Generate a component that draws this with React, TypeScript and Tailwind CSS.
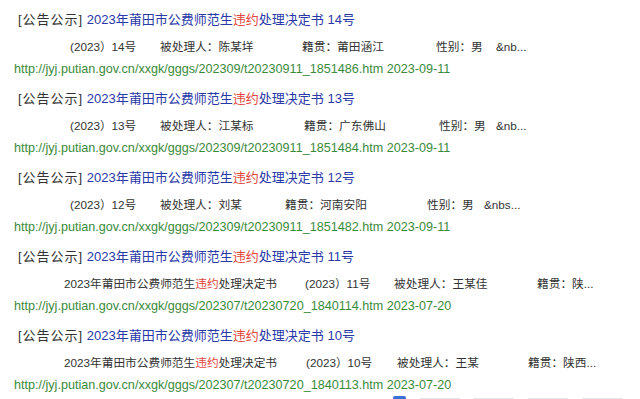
import React from "react";

type Cell = { text: string; w: string };

type Item = {
  no: string;
  snipPad: string;
  cells: Cell[];
  url: string;
  date: string;
};

const TITLE = ["2023年莆田市公费师范生", "违约", "处理决定书"];

const items: Item[] = [
  {
    no: "14号",
    snipPad: "pl-[70px]",
    cells: [
      { text: "(2023）14号", w: "w-[90px]" },
      { text: "被处理人：陈某垟", w: "w-[142px]" },
      { text: "籍贯：莆田涵江", w: "w-[134px]" },
      { text: "性别：男", w: "w-[60px]" },
      { text: "&nb...", w: "" },
    ],
    url: "http://jyj.putian.gov.cn/xxgk/gggs/202309/t20230911_1851486.htm",
    date: "2023-09-11",
  },
  {
    no: "13号",
    snipPad: "pl-[70px]",
    cells: [
      { text: "(2023）13号", w: "w-[90px]" },
      { text: "被处理人：江某标", w: "w-[144px]" },
      { text: "籍贯：广东佛山", w: "w-[135px]" },
      { text: "性别：男", w: "w-[57px]" },
      { text: "&nb...", w: "" },
    ],
    url: "http://jyj.putian.gov.cn/xxgk/gggs/202309/t20230911_1851484.htm",
    date: "2023-09-11",
  },
  {
    no: "12号",
    snipPad: "pl-[70px]",
    cells: [
      { text: "(2023）12号", w: "w-[90px]" },
      { text: "被处理人：刘某", w: "w-[125px]" },
      { text: "籍贯：河南安阳", w: "w-[142px]" },
      { text: "性别：男", w: "w-[57px]" },
      { text: "&nbs...", w: "" },
    ],
    url: "http://jyj.putian.gov.cn/xxgk/gggs/202309/t20230911_1851482.htm",
    date: "2023-09-11",
  },
  {
    no: "11号",
    snipPad: "pl-[64px]",
    cells: [
      { text: "title", w: "w-[241px]" },
      { text: "(2023）11号", w: "w-[89px]" },
      { text: "被处理人：王某佳", w: "w-[143px]" },
      { text: "籍贯：陕...", w: "" },
    ],
    url: "http://jyj.putian.gov.cn/xxgk/gggs/202307/t20230720_1840114.htm",
    date: "2023-07-20",
  },
  {
    no: "10号",
    snipPad: "pl-[64px]",
    cells: [
      { text: "title", w: "w-[242px]" },
      { text: "(2023）10号", w: "w-[91px]" },
      { text: "被处理人：王某", w: "w-[131px]" },
      { text: "籍贯：陕西...", w: "" },
    ],
    url: "http://jyj.putian.gov.cn/xxgk/gggs/202307/t20230720_1840113.htm",
    date: "2023-07-20",
  },
];

function TitleText() {
  return (
    <>
      {TITLE[0]}
      <span className="text-[#e2453c]">{TITLE[1]}</span>
      {TITLE[2]}
    </>
  );
}

export default function App() {
  return (
    <div
      className="w-[640px] h-[399px] overflow-hidden bg-white flex flex-col"
      style={{ fontFamily: '"Liberation Sans", "Noto Sans CJK SC", sans-serif' }}
    >
      <div className="flex flex-col gap-[10px] pt-[10px]">
        {items.map((it) => (
          <div key={it.no} className="flex flex-col">
            {/* title */}
            <div className="pl-[18px] text-[13px] leading-[20px] whitespace-nowrap">
              <span className="text-[#333] tracking-[1px]">[公告公示]</span>{" "}
              <span className="text-[#2a38a8]">
                <TitleText /> {it.no}
              </span>
            </div>
            {/* snippet */}
            <div className={`${it.snipPad} mt-[7px] flex text-[11.7px] leading-[20px] text-[#333] whitespace-nowrap`}>
              {it.cells.map((c, i) => (
                <span key={i} className={`${c.w} shrink-0`}>
                  {c.text === "title" ? <TitleText /> : c.text}
                </span>
              ))}
            </div>
            {/* url */}
            <div className="pl-[14px] mt-[2px] text-[12.6px] leading-[20px] text-[#3b8a3b] whitespace-nowrap">
              {it.url} {it.date}
            </div>
          </div>
        ))}
      </div>
      <div className="mt-auto flex items-end gap-[14px] pl-[393px] h-[3px]">
        <div className="w-[13px] h-[3px] bg-[#3b6fd8] rounded-t-[2px]" />
        <div className="w-[40px] h-[1px] bg-[#e4e6ea]" />
        <div className="w-[40px] h-[1px] bg-[#e4e6ea]" />
        <div className="w-[40px] h-[1px] bg-[#e4e6ea]" />
        <div className="w-[40px] h-[1px] bg-[#e4e6ea]" />
      </div>
    </div>
  );
}
